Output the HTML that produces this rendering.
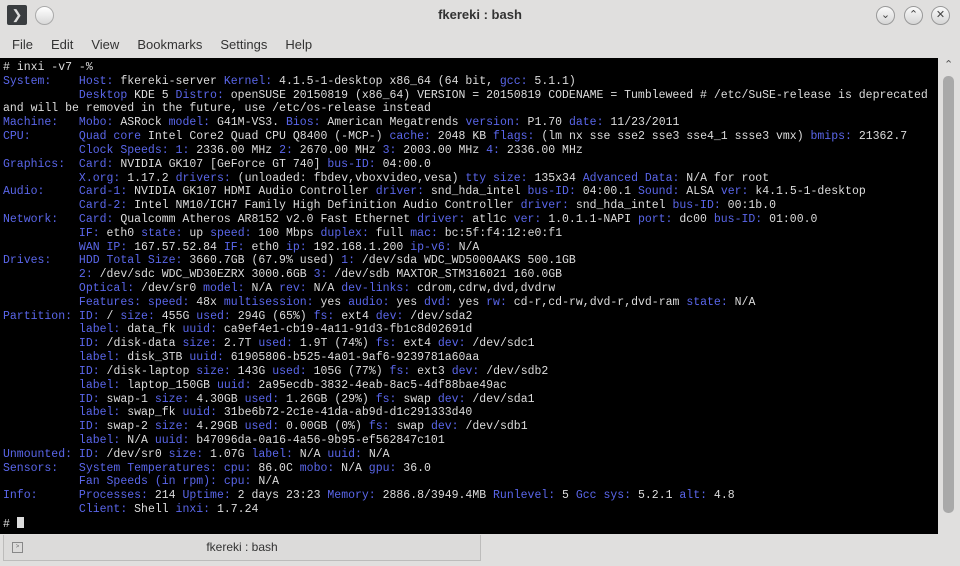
<!DOCTYPE html>
<html><head><meta charset="utf-8"><style>
body{margin:0;width:960px;height:566px;background:#e0dfde;font-family:"Liberation Sans",sans-serif;overflow:hidden;position:relative}
.title{position:absolute;top:7px;left:0;width:960px;text-align:center;font-size:13px;font-weight:bold;color:#333}
.ticon{position:absolute;left:7px;top:5px;width:20px;height:20px;background:#3a3d40;border-radius:2px;color:#ddd;font-size:13px;text-align:center;line-height:20px}
.pin{position:absolute;left:35px;top:6px;width:17px;height:17px;border-radius:50%;background:linear-gradient(#fff,#d8d8d8);border:1px solid #aaa}
.wb{position:absolute;top:6px;width:17px;height:17px;border-radius:50%;background:linear-gradient(#fafafa,#d6d6d6);border:1px solid #999;font-size:11px;text-align:center;line-height:17px;color:#444}
.menu{position:absolute;top:37px;left:12px;font-size:13px;color:#333;word-spacing:0}
.menu span{margin-right:18px}
.term{position:absolute;left:0;top:58px;width:938px;height:476px;background:#000}
pre{position:absolute;left:3px;top:61px;margin:0;font-family:"Liberation Mono",monospace;font-size:11.5px;line-height:13.82px;color:#dcdcdc;white-space:pre}
.k{color:#5a66ea}
.sb{position:absolute;left:939px;top:58px;width:21px;height:476px;background:#e0dfde}
.thumb{position:absolute;left:943px;top:76px;width:11px;height:437px;background:#a9a9a9;border-radius:5px}
.tab{position:absolute;left:3px;top:535px;width:476px;height:25px;background:#dcdbda;border:1px solid #bdbcbb;border-top:none;font-size:12px;color:#333;text-align:center;line-height:25px}
.cur{display:inline-block;width:7px;height:11px;background:#ddd;vertical-align:-1px}
</style></head><body>
<div class="ticon">&#x276F;</div><div class="pin"></div>
<div class="title">fkereki : bash</div>
<div class="wb" style="left:876px">&#x2304;</div>
<div class="wb" style="left:904px">&#x2303;</div>
<div class="wb" style="left:931px">&#x2715;</div>
<div class="menu"><span>File</span><span>Edit</span><span>View</span><span>Bookmarks</span><span>Settings</span><span>Help</span></div>
<div class="term"></div>
<div class="sb"><span style="position:absolute;left:5px;top:0;font-size:11px;color:#555">&#x2303;</span></div>
<div class="thumb"></div>
<pre># inxi -v7 -%
<span class="k">System:    Host:</span> fkereki-server <span class="k">Kernel:</span> 4.1.5-1-desktop x86_64 (64 bit, <span class="k">gcc:</span> 5.1.1)
           <span class="k">Desktop</span> KDE 5 <span class="k">Distro:</span> openSUSE 20150819 (x86_64) VERSION = 20150819 CODENAME = Tumbleweed # /etc/SuSE-release is deprecated
and will be removed in the future, use /etc/os-release instead
<span class="k">Machine:   Mobo:</span> ASRock <span class="k">model:</span> G41M-VS3. <span class="k">Bios:</span> American Megatrends <span class="k">version:</span> P1.70 <span class="k">date:</span> 11/23/2011
<span class="k">CPU:       Quad core</span> Intel Core2 Quad CPU Q8400 (-MCP-) <span class="k">cache:</span> 2048 KB <span class="k">flags:</span> (lm nx sse sse2 sse3 sse4_1 ssse3 vmx) <span class="k">bmips:</span> 21362.7
           <span class="k">Clock Speeds: 1:</span> 2336.00 MHz <span class="k">2:</span> 2670.00 MHz <span class="k">3:</span> 2003.00 MHz <span class="k">4:</span> 2336.00 MHz
<span class="k">Graphics:  Card:</span> NVIDIA GK107 [GeForce GT 740] <span class="k">bus-ID:</span> 04:00.0
           <span class="k">X.org:</span> 1.17.2 <span class="k">drivers:</span> (unloaded: fbdev,vboxvideo,vesa) <span class="k">tty size:</span> 135x34 <span class="k">Advanced Data:</span> N/A for root
<span class="k">Audio:     Card-1:</span> NVIDIA GK107 HDMI Audio Controller <span class="k">driver:</span> snd_hda_intel <span class="k">bus-ID:</span> 04:00.1 <span class="k">Sound:</span> ALSA <span class="k">ver:</span> k4.1.5-1-desktop
           <span class="k">Card-2:</span> Intel NM10/ICH7 Family High Definition Audio Controller <span class="k">driver:</span> snd_hda_intel <span class="k">bus-ID:</span> 00:1b.0
<span class="k">Network:   Card:</span> Qualcomm Atheros AR8152 v2.0 Fast Ethernet <span class="k">driver:</span> atl1c <span class="k">ver:</span> 1.0.1.1-NAPI <span class="k">port:</span> dc00 <span class="k">bus-ID:</span> 01:00.0
           <span class="k">IF:</span> eth0 <span class="k">state:</span> up <span class="k">speed:</span> 100 Mbps <span class="k">duplex:</span> full <span class="k">mac:</span> bc:5f:f4:12:e0:f1
           <span class="k">WAN IP:</span> 167.57.52.84 <span class="k">IF:</span> eth0 <span class="k">ip:</span> 192.168.1.200 <span class="k">ip-v6:</span> N/A
<span class="k">Drives:    HDD Total Size:</span> 3660.7GB (67.9% used) <span class="k">1:</span> /dev/sda WDC_WD5000AAKS 500.1GB
           <span class="k">2:</span> /dev/sdc WDC_WD30EZRX 3000.6GB <span class="k">3:</span> /dev/sdb MAXTOR_STM316021 160.0GB
           <span class="k">Optical:</span> /dev/sr0 <span class="k">model:</span> N/A <span class="k">rev:</span> N/A <span class="k">dev-links:</span> cdrom,cdrw,dvd,dvdrw
           <span class="k">Features: speed:</span> 48x <span class="k">multisession:</span> yes <span class="k">audio:</span> yes <span class="k">dvd:</span> yes <span class="k">rw:</span> cd-r,cd-rw,dvd-r,dvd-ram <span class="k">state:</span> N/A
<span class="k">Partition: ID:</span> / <span class="k">size:</span> 455G <span class="k">used:</span> 294G (65%) <span class="k">fs:</span> ext4 <span class="k">dev:</span> /dev/sda2
           <span class="k">label:</span> data_fk <span class="k">uuid:</span> ca9ef4e1-cb19-4a11-91d3-fb1c8d02691d
           <span class="k">ID:</span> /disk-data <span class="k">size:</span> 2.7T <span class="k">used:</span> 1.9T (74%) <span class="k">fs:</span> ext4 <span class="k">dev:</span> /dev/sdc1
           <span class="k">label:</span> disk_3TB <span class="k">uuid:</span> 61905806-b525-4a01-9af6-9239781a60aa
           <span class="k">ID:</span> /disk-laptop <span class="k">size:</span> 143G <span class="k">used:</span> 105G (77%) <span class="k">fs:</span> ext3 <span class="k">dev:</span> /dev/sdb2
           <span class="k">label:</span> laptop_150GB <span class="k">uuid:</span> 2a95ecdb-3832-4eab-8ac5-4df88bae49ac
           <span class="k">ID:</span> swap-1 <span class="k">size:</span> 4.30GB <span class="k">used:</span> 1.26GB (29%) <span class="k">fs:</span> swap <span class="k">dev:</span> /dev/sda1
           <span class="k">label:</span> swap_fk <span class="k">uuid:</span> 31be6b72-2c1e-41da-ab9d-d1c291333d40
           <span class="k">ID:</span> swap-2 <span class="k">size:</span> 4.29GB <span class="k">used:</span> 0.00GB (0%) <span class="k">fs:</span> swap <span class="k">dev:</span> /dev/sdb1
           <span class="k">label:</span> N/A <span class="k">uuid:</span> b47096da-0a16-4a56-9b95-ef562847c101
<span class="k">Unmounted: ID:</span> /dev/sr0 <span class="k">size:</span> 1.07G <span class="k">label:</span> N/A <span class="k">uuid:</span> N/A
<span class="k">Sensors:   System Temperatures: cpu:</span> 86.0C <span class="k">mobo:</span> N/A <span class="k">gpu:</span> 36.0
           <span class="k">Fan Speeds (in rpm): cpu:</span> N/A
<span class="k">Info:      Processes:</span> 214 <span class="k">Uptime:</span> 2 days 23:23 <span class="k">Memory:</span> 2886.8/3949.4MB <span class="k">Runlevel:</span> 5 <span class="k">Gcc sys:</span> 5.2.1 <span class="k">alt:</span> 4.8
           <span class="k">Client:</span> Shell <span class="k">inxi:</span> 1.7.24
# <span class="cur"></span></pre>
<div class="tab"><span style="position:absolute;left:8px;top:7px;width:9px;height:9px;border:1px solid #888;font-size:6px;line-height:8px;color:#666">&gt;</span>fkereki : bash</div>
</body></html>
